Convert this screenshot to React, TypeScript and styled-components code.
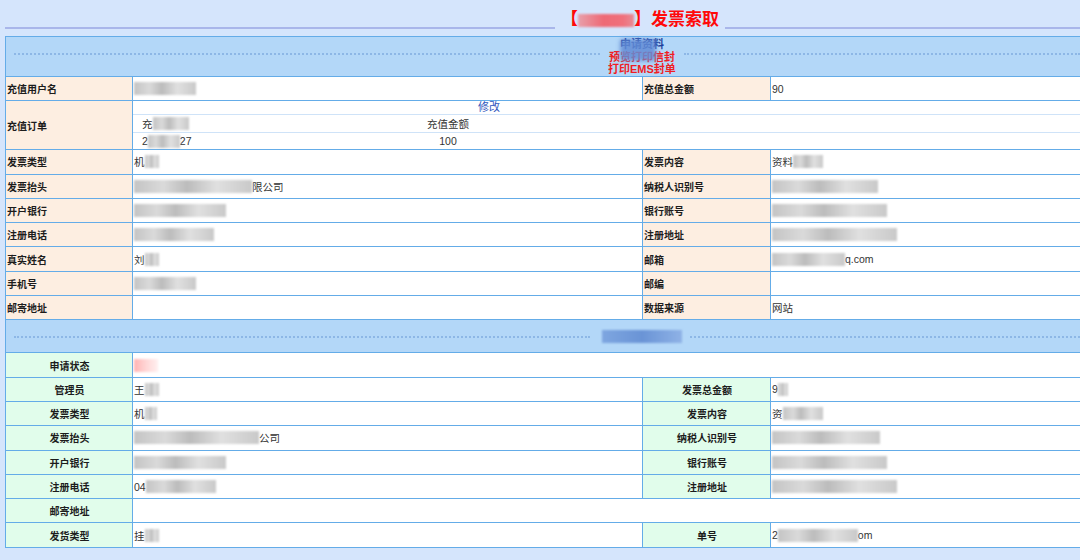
import styled, { createGlobalStyle } from "styled-components";

type Tone = "gray" | "red" | "blue" | "pink";
type Part = string | { m: number; tone?: Tone };

interface Pair {
  label: string;
  value: Part[];
}

interface Row {
  left: Pair;
  right?: Pair;
}

const GlobalStyle = createGlobalStyle`
  html, body {
    margin: 0;
    padding: 0;
    background: #d5e5fc;
    overflow: hidden;
  }
  body {
    font-family: "Liberation Sans", "Noto Sans CJK SC", sans-serif;
  }
`;

// the original page is wider than the window, so the right edge is cut off
const Page = styled.div`
  padding-left: 5px;
`;

const Legend = styled.div`
  display: flex;
  height: 36px;
`;

const LegendLine = styled.div<{ $fixed?: number }>`
  flex: ${(p) => (p.$fixed ? `0 0 ${p.$fixed}px` : "1")};
  height: 2px;
  margin-top: 27px;
  background: #a9b6ea;
`;

const Title = styled.h1`
  margin: 10px 0 0;
  padding: 0 6px;
  font-size: 17px;
  line-height: 20px;
  font-weight: 700;
  color: #ff0a0a;
  white-space: nowrap;
`;

const Sheet = styled.div`
  display: grid;
  grid-template-columns: 126px 509px 127px 1fr;
  grid-template-rows:
    39px 23.3px 48px repeat(7, 23.3px)
    32px repeat(8, 23.3px);
  gap: 1px;
  border: 1px solid #64ace8;
  border-right: none;
  background: #64ace8;
`;

const Band = styled.div<{ $lineTop: number; $lead: number }>`
  grid-column: 1 / -1;
  display: flex;
  align-items: flex-start;
  background: #b3d7f8;
  padding-left: 8px;

  &::before,
  &::after {
    content: "";
    flex: 1;
    margin-top: ${(p) => p.$lineTop}px;
    border-top: 2px dotted #8db7e6;
  }

  &::before {
    flex: 0 0 ${(p) => p.$lead}px;
  }
`;

const BandCenter = styled.div<{ $padTop: number; $padX: [number, number] }>`
  position: relative;
  padding: ${(p) => `${p.$padTop}px ${p.$padX[1]}px 0 ${p.$padX[0]}px`};
  text-align: center;
  font-size: 11px;
  line-height: 12.5px;
  font-weight: 700;
`;

const BandTitle = styled.div`
  color: #1d3f9c;
`;

const BandLink = styled.div`
  color: #f01d24;
`;

const Smear = styled.span<{ $x: number; $y: number; $w: number; $h: number; $c: string; $rot?: number }>`
  position: absolute;
  left: ${(p) => p.$x}px;
  top: ${(p) => p.$y}px;
  width: ${(p) => p.$w}px;
  height: ${(p) => p.$h}px;
  background: ${(p) => p.$c};
  filter: blur(2px);
  border-radius: 3px;
  transform: rotate(${(p) => p.$rot ?? 0}deg);
`;

const Label = styled.div<{ $mint?: boolean }>`
  display: flex;
  align-items: center;
  justify-content: ${(p) => (p.$mint ? "center" : "flex-start")};
  padding-left: 1px;
  background: ${(p) => (p.$mint ? "#e1fdeb" : "#fdeee1")};
  font-size: 10px;
  font-weight: 700;
  color: #1c1c1c;
  white-space: nowrap;
`;

const Value = styled.div<{ $wide?: boolean }>`
  grid-column: ${(p) => (p.$wide ? "2 / -1" : "auto")};
  display: flex;
  align-items: center;
  padding-left: 1px;
  background: #fff;
  font-size: 10.5px;
  color: #333;
  white-space: nowrap;
`;

const OrderCell = styled.div`
  grid-column: 2 / -1;
  display: grid;
  grid-template-rows: 13px 17px 16px;
  gap: 1px;
  background: #cfe3f8;
`;

const ModifyRow = styled.div`
  background: #fff;
  padding-left: 345px;
  font-size: 11px;
  line-height: 13px;
  color: #2f56bd;
`;

const OrderRow = styled.div`
  display: grid;
  grid-template-columns: 200px 230px 1fr;
  align-items: center;
  background: #fff;
  font-size: 10.5px;
  color: #333;
`;

const OrderNo = styled.span`
  display: flex;
  align-items: center;
  padding-left: 9px;
`;

const OrderAmount = styled.span`
  text-align: center;
`;

const tones: Record<Tone, string> = {
  gray: "linear-gradient(90deg, #c4c4c4, #dadada 25%, #bcbcbc 45%, #e0e0e0 70%, #c9c9c9)",
  red: "linear-gradient(90deg, #ffb3b3, #ffd6d6 50%, #fff0f0)",
  blue: "linear-gradient(90deg, #7ea6e0, #6a94d6 50%, #8fb2e6)",
  pink: "linear-gradient(90deg, #e8a0ab, #ee6a76 45%, #f0707c 80%, #e88a95)",
};

const Mosaic = styled.span<{ $w: number; $tone: Tone }>`
  display: inline-block;
  width: ${(p) => p.$w}px;
  height: 13px;
  background: ${(p) => tones[p.$tone]};
  filter: blur(1px);
  vertical-align: middle;
`;

const Parts = ({ parts }: { parts: Part[] }) => (
  <>
    {parts.map((p, i) =>
      typeof p === "string" ? (
        <span key={i}>{p}</span>
      ) : (
        <Mosaic key={i} $w={p.m} $tone={p.tone ?? "gray"} />
      )
    )}
  </>
);

const applyRows: Row[] = [
  { left: { label: "发票类型", value: ["机", { m: 14 }] }, right: { label: "发票内容", value: ["资料", { m: 30 }] } },
  { left: { label: "发票抬头", value: [{ m: 118 }, "限公司"] }, right: { label: "纳税人识别号", value: [{ m: 106 }] } },
  { left: { label: "开户银行", value: [{ m: 92 }] }, right: { label: "银行账号", value: [{ m: 115 }] } },
  { left: { label: "注册电话", value: [{ m: 80 }] }, right: { label: "注册地址", value: [{ m: 125 }] } },
  { left: { label: "真实姓名", value: ["刘", { m: 14 }] }, right: { label: "邮箱", value: [{ m: 73 }, "q.com"] } },
  { left: { label: "手机号", value: [{ m: 62 }] }, right: { label: "邮编", value: [] } },
  { left: { label: "邮寄地址", value: [] }, right: { label: "数据来源", value: ["网站"] } },
];

const handleRows: Row[] = [
  { left: { label: "申请状态", value: [{ m: 24, tone: "red" }] } },
  { left: { label: "管理员", value: ["王", { m: 14 }] }, right: { label: "发票总金额", value: ["9", { m: 10 }] } },
  { left: { label: "发票类型", value: ["机", { m: 12 }] }, right: { label: "发票内容", value: ["资", { m: 40 }] } },
  { left: { label: "发票抬头", value: [{ m: 125 }, "公司"] }, right: { label: "纳税人识别号", value: [{ m: 108 }] } },
  { left: { label: "开户银行", value: [{ m: 92 }] }, right: { label: "银行账号", value: [{ m: 115 }] } },
  { left: { label: "注册电话", value: ["04", { m: 70 }] }, right: { label: "注册地址", value: [{ m: 125 }] } },
  { left: { label: "邮寄地址", value: [] } },
  { left: { label: "发货类型", value: ["挂", { m: 14 }] }, right: { label: "单号", value: ["2", { m: 80 }, "om"] } },
];

const renderRows = (rows: Row[], mint: boolean) =>
  rows.map((r) => [
    <Label key={`${r.left.label}-l`} $mint={mint}>
      {r.left.label}
    </Label>,
    <Value key={`${r.left.label}-v`} $wide={!r.right}>
      <Parts parts={r.left.value} />
    </Value>,
    r.right && (
      <Label key={`${r.right.label}-l`} $mint={mint}>
        {r.right.label}
      </Label>
    ),
    r.right && (
      <Value key={`${r.right.label}-v`}>
        <Parts parts={r.right.value} />
      </Value>
    ),
  ]);

export default function App() {
  return (
    <>
      <GlobalStyle />
      <Page>
        <Legend>
          <LegendLine $fixed={550} />
          <Title>
            【<Mosaic $w={56} $tone="pink" />】发票索取
          </Title>
          <LegendLine />
        </Legend>

        <Sheet>
          <Band $lineTop={16} $lead={586}>
            <BandCenter $padTop={1} $padX={[8, 8]}>
              <BandTitle>申请资料</BandTitle>
              <BandLink>预览打印信封</BandLink>
              <BandLink>打印EMS封单</BandLink>
              <Smear $x={20} $y={2} $w={36} $h={22} $c="rgba(98,140,214,0.85)" />
            </BandCenter>
          </Band>

          <Label>充值用户名</Label>
          <Value>
            <Parts parts={[{ m: 62 }]} />
          </Value>
          <Label>充值总金额</Label>
          <Value>90</Value>

          <Label>充值订单</Label>
          <OrderCell>
            <ModifyRow>修改</ModifyRow>
            <OrderRow>
              <OrderNo>
                充<Mosaic $w={36} $tone="gray" />
              </OrderNo>
              <OrderAmount>充值金额</OrderAmount>
            </OrderRow>
            <OrderRow>
              <OrderNo>
                2<Mosaic $w={32} $tone="gray" />
                27
              </OrderNo>
              <OrderAmount>100</OrderAmount>
            </OrderRow>
          </OrderCell>

          {renderRows(applyRows, false)}

          <Band $lineTop={16} $lead={576}>
            <BandCenter $padTop={9} $padX={[12, 8]}>
              <Mosaic $w={80} $tone="blue" />
            </BandCenter>
          </Band>

          {renderRows(handleRows, true)}
        </Sheet>
      </Page>
    </>
  );
}
